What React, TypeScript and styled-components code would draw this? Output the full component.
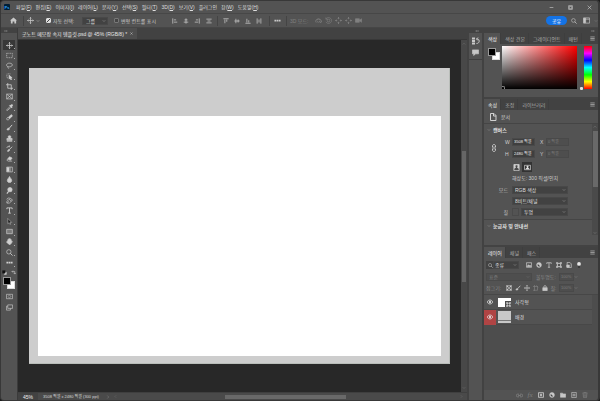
import React from "react";
import styled, { createGlobalStyle } from "styled-components";

const Global = createGlobalStyle`
  *, *::before, *::after { box-sizing: border-box; }
  html, body { margin: 0; padding: 0; background: #1c1c1c; }
  body, button, input, select {
    font-family: "Liberation Sans", "Noto Sans CJK KR", sans-serif;
    font-size: 5px;
    line-height: 8px;
    color: #d0d0d0;
  }
  button, input, select { margin: 0; padding: 0; border: 0; background: none; outline: none; }
  h1, h2, p, ul { margin: 0; padding: 0; font-weight: 400; font-size: 5px; list-style: none; }
`;

/* ---------- icons ---------- */

const glyphs: Record<string, React.ReactNode> = {
  home: <path fill="currentColor" stroke="none" d="M8 1 0 8h2v7h4v-5h4v5h4V8h2z" />,
  move: <path strokeWidth="1.8" d="M8 1v14M1 8h14M6 3l2-2 2 2M6 13l2 2 2-2M3 6 1 8l2 2M13 6l2 2-2 2" />,
  marquee: <path strokeDasharray="2.4 1.6" d="M1.500 3h13v10h-13z" />,
  lasso: <path d="M5 11C1 10 0 6 3 4s9-2 11 1-2 6-6 6c-2 0-4-1-4 1s3 1 2 3" />,
  quick: <><path strokeDasharray="2 1.500" d="M10 2H2v9h4" /><path fill="currentColor" d="m7 5 7 6-3 .4 2 3.600-2 .6-2-3.600-2 2z" /></>,
  crop: <path strokeWidth="1.8" d="M4 0v12h12M0 4h12v12" />,
  frame: <path d="M1.500 2.500h13v11h-13zM1.500 2.500l13 11M14.500 2.500l-13 11" />,
  dropper: <><path d="M9 6 2 13v2l2-1 7-6" /><path fill="currentColor" d="m8 4 5 5 1-2-1-1c2-1 3-3 2-4s-3-1-4 1L10 2z" /></>,
  heal: <><path fill="currentColor" d="M5 8 11 2c2-1 4 1 3 3l-6 6z" /><path d="M5 8c-3 0-4 2-3 5 3 1 5 0 6-2" /></>,
  brush: <><path strokeWidth="2.200" d="M14 2 7 10" /><path fill="currentColor" d="M6 9c-3 0-2 3-4 4 2 1 6 1 6-2z" /></>,
  stamp: <path fill="currentColor" d="M6 8c0-2-2-3-1-5s5-2 6 0-1 3-1 5h4v3H2V8zM2 13h12v1H2z" />,
  history: <><path strokeWidth="2" d="m14 4-7 7" /><path fill="currentColor" d="M7 10c-2 0-2 3-4 4 3 1 6 0 5-3z" /><path d="M2 7c0-4 4-5 6-3M8 1v3H5" /></>,
  eraser: <><path fill="currentColor" d="m8 4 6 3-4 5-6-3z" /><path d="m4 9-2 3 3 2h9" /></>,
  gradient: <><path d="M1.500 2.500h13v11h-13z" /><path fill="currentColor" stroke="none" opacity=".5" d="M7 3h4v10H7z" /><path fill="currentColor" stroke="none" d="M2 3h5v10H2z" /></>,
  blur: <path fill="currentColor" d="M8 1c2 4 5 6 5 9s-2 5-5 5-5-2-5-5 3-5 5-9z" />,
  dodge: <><circle cx="9" cy="6" r="5" fill="currentColor" /><path strokeWidth="2.500" d="m6 10-4 5" /></>,
  pen: <><path d="M2 14c-1-4 1-7 6-8l4 3c-1 4-5 6-9 5zM8 6l2-3 5 4-3 2M3 13l4-3" /><path d="M2 6c0-3 4-5 7-3" /></>,
  type: <path strokeWidth="2" d="M2 5V2h12v3M8 2v12M5 14h6" />,
  select: <path fill="#242424" strokeWidth="1" d="m4 1 9 9H9l2 4-2 1-2-4-3 2z" />,
  rect: <path fill="#7b7b7b" d="M1.500 3h13v10h-13z" />,
  hand: <path fill="currentColor" d="M4 8V4l1-1 1 1V2l1-1 1 1 1-1 1 1v2l1-1 1 1v4l2-1c1 1-2 7-5 8H7L1 9l1-1z" />,
  search: <><circle cx="6.500" cy="6.500" r="5" /><path strokeWidth="2" d="m10 10 5 5" /></>,
  dots: <path fill="currentColor" stroke="none" d="M1 6h4v4H1zM6 6h4v4H6zM11 6h4v4h-4z" />,
  mask: <><path d="M1 3h14v10H1z" /><circle cx="8" cy="8" r="3" strokeDasharray="2 1" /></>,
  screen: <path d="M4 2h11v8H4zM4 5H1v9h9v-4" />,
  swap: <path strokeWidth="2" d="M3 5h9v8M6 2 3 5l3 3M9 10l3 3 3-3" />,
  tiny: <><path fill="#ddd" d="M7 7h7v7H7z" /><path fill="#111" stroke="#111" d="M2 2h8v8H2z" /></>,
  alignL: <path strokeWidth="2" d="M2 1v14M5 5h6M5 11h9" />,
  alignC: <path strokeWidth="2" d="M8 1v14M4 5h8M2 11h12" />,
  alignR: <path strokeWidth="2" d="M14 1v14M11 5H5M11 11H2" />,
  distH: <path strokeWidth="2" d="M1 3h14M4 8h8M1 13h14" />,
  alignT: <path strokeWidth="2" d="M1 2h14M5 4v10M10 4v6" />,
  alignM: <path strokeWidth="2" d="M1 8h14M5 2v12M11 4v8" />,
  alignB: <path strokeWidth="2" d="M1 14h14M5 12V2M10 12V6" />,
  distV: <path strokeWidth="2" d="M3 1v14M8 4v8M13 1v14" />,
  orbit: <><circle cx="8" cy="8" r="4" /><path d="M3 13C-1 9 2 5 8 5s9 4 5 8M10 10l3 3 2-4" /></>,
  roll: <><circle cx="8" cy="8" r="3" /><path d="M2 5c3-6 13-4 13 3s-10 9-13 3M2 1v4h4" /></>,
  slide: <path strokeWidth="2" d="M8 1v4M8 11v4M1 8h4M11 8h4M6 3l2-2 2 2M6 13l2 2 2-2M3 6 1 8l2 2M13 6l2 2-2 2" />,
  camera: <path fill="currentColor" d="M1 4h9v8H1zM10 8l5-4v8z" />,
  workspace: <><path d="M1 2h14v12H1zM1 5h14" /><path fill="currentColor" d="M2 3h4v10H2z" /></>,
  chevron: <path strokeWidth="2" d="m3 5 5 5 5-5" />,
  menu: <path strokeWidth="2" d="M1 3h14M1 8h14M1 13h14" />,
  min: <path strokeWidth="2" d="M2 8h12" />,
  max: <path strokeWidth="2" d="M2 2h12v12H2zM4 5h8v7H4z" />,
  close: <path strokeWidth="2" d="m2 2 12 12M14 2 2 14" />,
  expand: <path strokeWidth="2" d="m2 4 4 4-4 4M9 4l4 4-4 4" />,
  collapse: <path strokeWidth="2" d="M7 4 3 8l4 4M14 4l-4 4 4 4" />,
  panel: <><path fill="currentColor" stroke="none" d="M0 1h6v4H0zM0 6h6v4H0zM0 11h6v4H0z" /><path strokeWidth="2" d="M9 13c6 0 7-7 3-9H9M12 1 9 4l3 3" /></>,
  comment: <path fill="currentColor" d="M1 2h14v9H8l-4 4v-4H1z" />,
  page: <path strokeWidth="2" d="M3 1h7l4 4v10H3zM9 1v5h5" />,
  link: <path strokeWidth="1.800" d="M5 7V4c0-4 6-4 6 0v3M5 9v3c0 4 6 4 6 0V9M8 5v6" />,
  portrait: <><path fill="#c9c9c9" d="M2 1h12v14H2z" /><path fill="#4a4a4a" stroke="none" d="M8 3c4 0 2 5 1 5l4 3v3H3v-3l4-3C5 6 5 3 8 3z" /></>,
  landscape: <><path d="M1 3h14v10H1z" /><path fill="currentColor" stroke="none" d="M8 4c4 0 2 4 1 4l3 2v2H4v-2l3-2C5 7 5 4 8 4z" /></>,
  image: <><path strokeWidth="2" d="M1 2h14v12H1z" /><path fill="currentColor" d="m3 12 3-5 3 3 2-2 2 4z" /></>,
  adjust: <><circle cx="8" cy="8" r="6.500" fill="currentColor" /><path fill="#424242" stroke="none" d="M5 5l6 6c-5 3-8-2-6-6z" /></>,
  shape: <path strokeWidth="2" d="M4 4h8v8H4zM1 1h4v4H1zM11 1h4v4h-4zM1 11h4v4H1zM11 11h4v4h-4z" />,
  smart: <><path strokeWidth="2" d="M3 1h7l4 4v10H3z" /><path fill="currentColor" d="M2 8h7v6H2z" /></>,
  pin: <><path d="M8 8v8" stroke="#333" strokeWidth="4" /><circle cx="8" cy="5" r="5" fill="#e8e8e8" stroke="none" /></>,
  checker: <><path d="M1 1h14v14H1z" /><path fill="currentColor" stroke="none" d="M2 2h4v4H2zM10 2h4v4h-4zM6 6h4v4H6zM2 10h4v4H2zM10 10h4v4h-4z" /></>,
  lock: <><path fill="currentColor" d="M2 7h12v8H2z" /><path strokeWidth="2" d="M5 7V4c0-3 6-3 6 0v3" /></>,
  artboard: <path strokeWidth="1.800" d="M4 0v16M0 4h12v10H0M9 1l5 5" />,
  eye: <><path strokeWidth="2" d="M0 8c4-7 12-7 16 0-4 7-12 7-16 0z" /><circle cx="8" cy="8" r="2.500" fill="currentColor" /></>,
  chain: <path strokeWidth="2" d="M7 5H3C0 5 0 11 3 11h4M9 5h4c3 0 3 6 0 6H9M5 8h6" />,
  layermask: <><path strokeWidth="2.500" d="M1 2h14v12H1z" /><circle cx="8" cy="8" r="2.500" fill="currentColor" /></>,
  folder: <path fill="currentColor" d="M1 3h6l2 2h6v9H1z" />,
  plus: <path strokeWidth="1.800" d="M2 1h12v14H2zM8 4v8M4 8h8" />,
  trash: <path strokeWidth="1.800" d="M1 3h14M5 3V1h6v2M3 4l1 11h8l1-11M6 6v7M10 6v7" />,
  right: <path strokeWidth="2" d="m5 2 6 6-6 6" />,
  left: <path strokeWidth="2" d="m11 2-6 6 6 6" />,
  up: <path strokeWidth="2" d="m3 10 5-5 5 5" />,
};

const Svg = styled.svg<{ $s: number }>`
  display: block;
  flex: none;
  width: ${(p) => p.$s}px;
  height: ${(p) => p.$s}px;
  fill: none;
  stroke: currentColor;
  stroke-width: 1.5;
`;
const Icon = ({ n, s = 7 }: { n: string; s?: number }) => (
  <Svg $s={s} viewBox="0 0 16 16" aria-hidden="true">{glyphs[n]}</Svg>
);

/* ---------- shared parts ---------- */

const IconButton = styled.button<{ $w?: number; $dim?: boolean }>`
  display: flex;
  flex: none;
  align-items: center;
  justify-content: center;
  width: ${(p) => p.$w ?? 10}px;
  height: 10px;
  color: ${(p) => (p.$dim ? "#808080" : "#c8c8c8")};
`;
const SelectBox = styled.span<{ $w: number; $dim?: boolean }>`
  position: relative;
  display: flex;
  flex: none;
  align-items: center;
  width: ${(p) => p.$w}px;
  height: 8px;
  background: ${(p) => (p.$dim ? "#4e4e4e" : "#424242")};
  border: 1px solid ${(p) => (p.$dim ? "#4a4a4a" : "#484848")};
  color: ${(p) => (p.$dim ? "#737373" : "#a2a2a2")};
  > svg { position: absolute; right: 1px; pointer-events: none; }
`;
const NativeSelect = styled.select<{ $pad: number }>`
  appearance: none;
  width: 100%;
  height: 8px;
  padding-left: ${(p) => p.$pad}px;
  color: ${(p) => (p.disabled ? "#7c7c7c" : "#dedede")};
  opacity: 1;
`;
const Select = ({ w, label, value, pad = 2, dim }: { w: number; label: string; value: string; pad?: number; dim?: boolean }) => (
  <SelectBox $w={w} $dim={dim}>
    <NativeSelect aria-label={label} $pad={pad} disabled={dim}><option>{value}</option></NativeSelect>
    <Icon n="chevron" s={4} />
  </SelectBox>
);
const Field = styled.input<{ $w: number }>`
  flex: none;
  width: ${(p) => p.$w}px;
  height: 8px;
  padding-left: 1px;
  font-size: 4px;
  background: #3f3f3f;
  border: 1px solid #494949;
  color: #f2f2f2;
  &:disabled { background: #4e4e4e; color: #7c7c7c; }
`;
const Check = styled.input`
  appearance: none;
  flex: none;
  width: 5px;
  height: 5px;
  margin-right: 2px;
  border: 1px solid #777;
  border-radius: 1px;
  background: #454545;
  &:checked {
    border-color: #dedede;
    background: linear-gradient(135deg, #dedede 40%, #444 40% 65%, #dedede 65%);
  }
`;

/* ---------- frame ---------- */

const Window = styled.div`
  display: flex;
  flex-direction: column;
  height: 100vh;
  overflow: hidden;
  background: #535353;
  border: 1px solid #383838;
  border-right-width: 2px;
  border-radius: 4px;
  white-space: nowrap;
`;
const TitleBar = styled.header`
  display: flex;
  flex: none;
  align-items: center;
  height: 13px;
  padding: 0 4px 0 3px;
  border-bottom: 1px solid #474747;
`;
const Logo = styled.span`
  display: grid;
  place-items: center;
  width: 6px;
  height: 6px;
  margin-right: 6px;
  border-radius: 1px;
  background: #001e36;
  color: #31a8ff;
  font-size: 4px;
  font-weight: 700;
  line-height: 5px;
`;
const Menu = styled.nav`
  display: flex;
  flex: 1;
  gap: 4px;
`;
const MenuItem = styled.button`
  color: #dedede;
`;
const WindowControls = styled.div`
  display: flex;
  gap: 9px;
`;

const OptionsBar = styled.div`
  display: flex;
  flex: none;
  align-items: center;
  height: 14px;
  border-bottom: 1px solid #464646;
`;
const Group = styled.div<{ $w?: number; $gap?: number; $line?: boolean; $pad?: number; $dim?: boolean }>`
  display: flex;
  flex: none;
  align-items: center;
  width: ${(p) => (p.$w ? `${p.$w}px` : "auto")};
  height: 10px;
  gap: ${(p) => p.$gap ?? 0}px;
  padding-left: ${(p) => p.$pad ?? 0}px;
  border-left: ${(p) => (p.$line ? "1px solid #444" : "0")};
  color: ${(p) => (p.$dim ? "#808080" : "#bbb")};
`;
const CheckLabel = styled.label`
  display: flex;
  align-items: center;
  color: #cacaca;
`;
const Spacer = styled.span`
  flex: 1;
`;
const Share = styled.button`
  width: 21px;
  height: 9px;
  border-radius: 5px;
  background: #1473e6;
  color: #fff;
`;

const Body = styled.div`
  display: flex;
  flex: 1;
  min-height: 0;
`;

/* ---------- tools ---------- */

const ToolColumn = styled.aside`
  flex: none;
  width: 17px;
  border-right: 1px solid #3b3b3b;
`;
const Grip = styled.div<{ $end?: boolean }>`
  display: flex;
  flex: none;
  align-items: center;
  justify-content: ${(p) => (p.$end ? "flex-end" : "flex-start")};
  height: 5px;
  padding: 0 3px;
  background: #424242;
  color: #aaa;
`;
const ToolList = styled.div`
  display: grid;
  grid-auto-rows: 1fr;
  justify-items: center;
  height: 228px;
  margin-top: 7px;
`;
const Tool = styled.button<{ $active?: boolean }>`
  display: grid;
  place-items: center;
  position: relative;
  width: 12px;
  height: 10px;
  color: #d0d0d0;
  background: ${(p) => (p.$active ? "#383838" : "none")};
  &::after {
    content: "";
    position: absolute;
    right: 0;
    bottom: 1px;
    width: 1px;
    height: 1px;
    background: #aaa;
  }
`;
const MiniRow = styled.div`
  display: flex;
  justify-content: center;
  gap: 4px;
  height: 9px;
  padding-top: 2px;
  color: #ccc;
`;
const Swatches = styled.div`
  position: relative;
  width: 12px;
  height: 12px;
  margin: 0 auto;
`;
const Swatch = styled.button<{ $back?: boolean }>`
  position: absolute;
  ${(p) => (p.$back ? "right: 0; bottom: 0; background: #fff;" : "left: 0; top: 0; background: #000; z-index: 1;")}
  width: 8px;
  height: 8px;
  border: 1px solid ${(p) => (p.$back ? "#ddd" : "#999")};
`;
const ToolFoot = styled.div`
  display: flex;
  flex-direction: column;
  align-items: center;
  gap: 1px;
  padding-top: 2px;
`;

const tools: [string, string][] = [
  ["move", "이동"], ["marquee", "선택 윤곽"], ["lasso", "올가미"], ["quick", "개체 선택"],
  ["crop", "자르기"], ["frame", "프레임"], ["dropper", "스포이드"], ["heal", "복구 브러시"],
  ["brush", "브러시"], ["stamp", "도장"], ["history", "작업 내역 브러시"], ["eraser", "지우개"],
  ["gradient", "그레이디언트"], ["blur", "흐림"], ["dodge", "닷지"], ["pen", "펜"],
  ["type", "문자"], ["select", "패스 선택"], ["rect", "사각형"], ["hand", "손"],
  ["search", "돋보기"], ["dots", "더 보기"],
];

/* ---------- document ---------- */

const DocumentArea = styled.main`
  display: flex;
  flex: 1;
  flex-direction: column;
  min-width: 0;
`;
const DocTabs = styled.div`
  display: flex;
  flex: none;
  height: 12px;
  background: #424242;
  border-bottom: 1px solid #383838;
`;
const DocTab = styled.button`
  display: flex;
  align-items: center;
  gap: 3px;
  padding: 0 4px;
  background: #4e4e4e;
  color: #e6e6e6;
`;
const Stage = styled.div`
  display: flex;
  flex: 1;
  min-height: 0;
`;
const Pasteboard = styled.div`
  display: flex;
  flex: 1;
  padding: 28px 11px;
  background: #282828;
`;
const Artboard = styled.div`
  display: flex;
  flex: 1;
  padding: 48px 8px 7px 9px;
  background: #cdcdcd;
  border: 1px solid #b9bdb9;
  border-width: 0 1px 1px 0;
`;
const Shape = styled.div`
  flex: 1;
  background: #fff;
`;
const VScroll = styled.div`
  display: flex;
  flex: none;
  flex-direction: column;
  align-items: center;
  justify-content: space-between;
  width: 6px;
  padding: 2px 0;
  background: #484848;
  color: #777;
`;
const VThumb = styled.div`
  width: 4px;
  height: 131px;
  background: #666;
`;
const StatusBar = styled.footer`
  display: flex;
  flex: none;
  align-items: center;
  height: 8px;
  border-top: 1px solid #3f3f3f;
  background: #4a4a4a;
`;
const Zoom = styled.span`
  width: 20px;
  padding-left: 5px;
  background: #424242;
  color: #eee;
`;
const DocSize = styled.span`
  width: 68px;
  padding-left: 5px;
  color: #d6d6d6;
  font-size: 4px;
`;
const HTrack = styled.div`
  display: flex;
  flex: 1;
  justify-content: center;
  padding-right: 7px;
`;
const HThumb = styled.div`
  width: 121px;
  height: 4px;
  background: #696969;
`;

/* ---------- dock ---------- */

const IconDock = styled.aside`
  flex: none;
  width: 17px;
  border: 1px solid #424242;
  border-width: 0 2px 0 2px;
`;
const DockIcons = styled.div`
  display: flex;
  flex-direction: column;
  align-items: center;
  height: 27px;
  padding-top: 3px;
  gap: 1px;
  border-bottom: 1px solid #404040;
`;
const Dock = styled.aside`
  display: flex;
  flex: none;
  flex-direction: column;
  width: 114px;
`;
const Panel = styled.section<{ $h?: number }>`
  display: flex;
  flex: ${(p) => (p.$h ? "none" : "1")};
  flex-direction: column;
  min-height: 0;
  height: ${(p) => (p.$h ? `${p.$h}px` : "auto")};
  border-bottom: ${(p) => (p.$h ? "2px solid #434343" : "0")};
`;
const Tabs = styled.div`
  display: flex;
  flex: none;
  align-items: stretch;
  height: 11px;
  padding-right: 3px;
  background: #424242;
`;
const Tab = styled.button<{ $on?: boolean }>`
  padding: 0 4px;
  background: ${(p) => (p.$on ? "#535353" : "none")};
  color: ${(p) => (p.$on ? "#f2f2f2" : "#acacac")};
  box-shadow: inset -1px 0 #3e3e3e;
`;
const PanelTabs = ({ names }: { names: string[] }) => (
  <Tabs role="tablist">
    {names.map((n, i) => <Tab key={n} role="tab" aria-selected={i === 0} $on={i === 0}>{n}</Tab>)}
    <Spacer />
    <IconButton $w={5} aria-label="패널 메뉴"><Icon n="menu" s={5} /></IconButton>
  </Tabs>
);

const ColorBody = styled.div`
  display: flex;
  flex: 1;
  min-height: 0;
  padding: 2px 6px 8px 4px;
`;
const ColorField = styled.div`
  position: relative;
  flex: 1;
  margin: 0 7px 0 2px;
  background: linear-gradient(to top, #000, transparent), linear-gradient(to right, #fff, #f00);
`;
const ColorCursor = styled.span`
  position: absolute;
  left: 0;
  bottom: 0;
  width: 3px;
  height: 3px;
  border: 1px solid #888;
  border-width: 1px 1px 0 0;
  border-radius: 0 2px 0 0;
`;
const HueBox = styled.div`
  position: relative;
  display: flex;
  width: 8px;
`;
const HueMark = styled.span`
  position: absolute;
  left: -4px;
  bottom: -1px;
  width: 3px;
  height: 3px;
  border-radius: 1px;
  background: #e4e4e4;
`;
const HueSlider = styled.input`
  appearance: none;
  writing-mode: vertical-lr;
  direction: rtl;
  width: 8px;
  height: 100%;
  min-height: 0;
  background: linear-gradient(#f00, #f0f 17%, #00f 33%, #0ff 50%, #0f0 67%, #ff0 83%, #f00);
  &::-webkit-slider-thumb { appearance: none; width: 8px; height: 2px; background: transparent; }
`;
const ColorSwatches = styled.div`
  padding-top: 2px;
`;

const PropHead = styled.div`
  display: flex;
  flex: none;
  align-items: center;
  gap: 4px;
  height: 14px;
  padding-left: 5px;
  border-bottom: 1px solid #454545;
`;
const PropBody = styled.div`
  display: flex;
  flex: 1;
  min-height: 0;
`;
const PropMain = styled.div`
  flex: 1;
`;
const SectionTitle = styled.h2`
  display: flex;
  align-items: center;
  gap: 2px;
  height: 12px;
  padding-left: 3px;
  color: #e2e2e2;
  font-weight: 700;
  > svg { color: #999; }
`;
const CanvasGrid = styled.div`
  display: grid;
  grid-template-columns: 21px 7px 28px 6px 23px;
  grid-auto-rows: 8px;
  row-gap: 4px;
  align-items: center;
  padding-top: 2px;
`;
const LinkCell = styled.div`
  display: grid;
  grid-row: span 2;
  place-items: center;
  padding-right: 2px;
`;
const Orientation = styled.div`
  display: flex;
  align-items: center;
  gap: 1px;
  height: 10px;
  margin: 4px 0 0 27px;
`;
const OrientButton = styled.button<{ $on?: boolean }>`
  display: grid;
  place-items: center;
  width: 10px;
  height: 10px;
  background: ${(p) => (p.$on ? "#333" : "none")};
  color: #e0e0e0;
`;
const Resolution = styled.p`
  height: 9px;
  margin: 2px 0;
  padding-left: 28px;
`;
const PropRow = styled.div<{ $h: number }>`
  display: grid;
  grid-template-columns: 24px auto auto 1fr;
  align-items: center;
  column-gap: 4px;
  height: ${(p) => p.$h}px;
`;
const RowLabel = styled.span`
  text-align: right;
  color: #bcbcbc;
`;
const FillBox = styled.button`
  width: 7px;
  height: 8px;
  margin-right: -2px;
  border: 1px solid #4a4a4a;
`;
const Divider = styled.div`
  height: 1px;
  margin-top: 1px;
  background: #454545;
`;
const PropScroll = styled.div`
  display: flex;
  flex-direction: column;
  align-items: center;
  width: 6px;
  margin-bottom: 10px;
  padding-top: 1px;
  background: #4a4a4a;
  color: #888;
`;
const PropThumb = styled.div`
  width: 5px;
  height: 56px;
  margin: 2px 0 auto;
  background: #696969;
`;

const LayerRow = styled.div<{ $h: number; $dim?: boolean }>`
  display: flex;
  flex: none;
  align-items: center;
  height: ${(p) => p.$h}px;
  padding-left: 2px;
  color: ${(p) => (p.$dim ? "#888" : "#ccc")};
`;
const FilterSelect = styled.div`
  display: flex;
  flex: none;
  align-items: center;
  padding-left: 2px;
  background: #424242;
`;
const LabelCell = styled.label<{ $w: number }>`
  flex: none;
  width: ${(p) => p.$w}px;
`;
const LayerList = styled.ul`
  flex: 1;
  background: #4d4d4d;
  border-top: 1px solid #474747;
`;
const Layer = styled.li`
  display: flex;
  align-items: center;
  height: 15px;
  margin-right: 6px;
  border-bottom: 1px solid #484848;
  background: #535353;
  color: #ddd;
`;
const Visibility = styled.button<{ $red?: boolean }>`
  display: grid;
  flex: none;
  place-items: center;
  width: 12px;
  height: 15px;
  margin-right: 2px;
  color: #e6e6e6;
  background: ${(p) => (p.$red ? "#b04444" : "none")};
`;
const Thumb = styled.span<{ $bg?: boolean }>`
  position: relative;
  flex: none;
  width: 13px;
  height: ${(p) => (p.$bg ? 12 : 9)}px;
  margin-right: 4px;
  background: ${(p) => (p.$bg ? "linear-gradient(#c8c8c8 9px, #777 9px 10px, #c8c8c8 10px)" : "#fff")};
`;
const Badge = styled.span`
  position: absolute;
  right: 0;
  bottom: 0;
  padding: 1px 0 0 1px;
  background: #4a4a4a;
  color: #ddd;
`;
const LayerTools = styled.div`
  display: flex;
  flex: none;
  align-items: center;
  justify-content: flex-end;
  gap: 1px;
  height: 10px;
  padding-right: 8px;
`;
const Fx = styled.i`
  font-family: "Liberation Serif", serif;
  font-size: 7px;
`;

const menus: [string, string][] = [
  ["파일", "F"], ["편집", "E"], ["이미지", "I"], ["레이어", "L"], ["문자", "Y"], ["선택", "S"],
  ["필터", "T"], ["3D", "D"], ["보기", "V"], ["플러그인", ""], ["창", "W"], ["도움말", "H"],
];

export default function App() {
  return (
    <>
      <Global />
      <Window>
        <TitleBar>
          <Logo>Ps</Logo>
          <Menu>
            {menus.map(([t, k]) => <MenuItem key={t}>{t}{k && <>(<u>{k}</u>)</>}</MenuItem>)}
          </Menu>
          <WindowControls>
            <IconButton aria-label="최소화"><Icon n="min" s={5} /></IconButton>
            <IconButton aria-label="최대화"><Icon n="max" s={5} /></IconButton>
            <IconButton aria-label="닫기"><Icon n="close" s={5} /></IconButton>
          </WindowControls>
        </TitleBar>

        <OptionsBar>
          <Group $w={22} $pad={7}><IconButton aria-label="홈"><Icon n="home" /></IconButton></Group>
          <Group $w={23} $pad={1} $gap={1} $line>
            <IconButton aria-label="이동 도구"><Icon n="move" /></IconButton>
            <Icon n="chevron" s={4} />
          </Group>
          <Group $w={36}><CheckLabel><Check type="checkbox" defaultChecked />자동 선택:</CheckLabel></Group>
          <Group $w={32}><Select w={26} label="자동 선택" value="그룹" pad={3} /></Group>
          <Group $w={55}><CheckLabel><Check type="checkbox" />변형 컨트롤 표시</CheckLabel></Group>
          <Group $w={35} $pad={1} $gap={1}>
            {["alignL", "alignC", "alignR"].map((n) => <IconButton key={n} aria-label={n}><Icon n={n} s={6} /></IconButton>)}
          </Group>
          <Group $w={13}><IconButton aria-label="distH"><Icon n="distH" s={6} /></IconButton></Group>
          <Group $w={37} $pad={3} $gap={1} $line>
            {["alignT", "alignM", "alignB"].map((n) => <IconButton key={n} aria-label={n}><Icon n={n} s={6} /></IconButton>)}
          </Group>
          <Group $w={15}><IconButton aria-label="distV"><Icon n="distV" s={6} /></IconButton></Group>
          <Group $w={17} $pad={2} $line><IconButton aria-label="맞춤 옵션"><Icon n="dots" /></IconButton></Group>
          <Group $w={27} $pad={3} $line $dim>3D 모드:</Group>
          <Group>
            {["orbit", "roll", "slide", "slide", "camera"].map((n, i) => (
              <IconButton key={i} $w={10} $dim aria-label={`3D ${i + 1}`}><Icon n={n} /></IconButton>
            ))}
          </Group>
          <Spacer />
          <Share>공유</Share>
          <Group $pad={2} $gap={2}>
            <IconButton aria-label="검색"><Icon n="search" s={6} /></IconButton>
            <IconButton aria-label="작업 영역"><Icon n="workspace" /></IconButton>
            <IconButton $w={5} $dim aria-label="작업 영역 선택"><Icon n="chevron" s={4} /></IconButton>
          </Group>
        </OptionsBar>

        <Body>
          <ToolColumn>
            <Grip><Icon n="expand" s={4} /></Grip>
            <ToolList>
              {tools.map(([n, t], i) => <Tool key={n} $active={i === 0} aria-label={t}><Icon n={n} /></Tool>)}
            </ToolList>
            <MiniRow><Icon n="tiny" s={5} /><Icon n="swap" s={5} /></MiniRow>
            <Swatches>
              <Swatch aria-label="전경색" />
              <Swatch $back aria-label="배경색" />
            </Swatches>
            <ToolFoot>
              <IconButton aria-label="빠른 마스크"><Icon n="mask" /></IconButton>
              <IconButton aria-label="화면 모드"><Icon n="screen" /></IconButton>
            </ToolFoot>
          </ToolColumn>

          <DocumentArea>
            <DocTabs role="tablist">
              <DocTab role="tab" aria-selected>
                굿노트 메모장 속지 템플릿.psd @ 45% (RGB/8) * <Icon n="close" s={3} />
              </DocTab>
            </DocTabs>
            <Stage>
              <Pasteboard><Artboard><Shape /></Artboard></Pasteboard>
              <VScroll><Icon n="up" s={4} /><VThumb /><Icon n="chevron" s={4} /></VScroll>
            </Stage>
            <StatusBar>
              <Zoom>45%</Zoom>
              <DocSize>3508 픽셀 x 2480 픽셀 (300 ppi)</DocSize>
              <Group $gap={4} $dim><Icon n="right" s={4} /><Icon n="left" s={3} /></Group>
              <HTrack><HThumb /></HTrack>
              <Group $w={7} $dim><Icon n="right" s={3} /></Group>
            </StatusBar>
          </DocumentArea>

          <IconDock>
            <Grip $end><Icon n="collapse" s={4} /></Grip>
            <DockIcons>
              <IconButton aria-label="작업 내역"><Icon n="panel" s={8} /></IconButton>
              <IconButton aria-label="댓글"><Icon n="comment" /></IconButton>
            </DockIcons>
          </IconDock>

          <Dock>
            <Grip $end><Icon n="expand" s={4} /></Grip>
            <Panel $h={66}>
              <PanelTabs names={["색상", "색상 견본", "그레이디언트", "패턴"]} />
              <ColorBody>
                <ColorSwatches>
                  <Swatches>
                    <Swatch aria-label="전경색" />
                    <Swatch $back aria-label="배경색" />
                  </Swatches>
                </ColorSwatches>
                <ColorField><ColorCursor /></ColorField>
                <HueBox>
                  <HueSlider type="range" aria-label="색조" defaultValue={0} />
                  <HueMark />
                </HueBox>
              </ColorBody>
            </Panel>

            <Panel $h={148}>
              <PanelTabs names={["속성", "조정", "라이브러리"]} />
              <PropHead><Icon n="page" s={8} />문서</PropHead>
              <PropBody>
                <PropMain>
                  <SectionTitle><Icon n="chevron" s={4} />캔버스</SectionTitle>
                  <CanvasGrid>
                    <LinkCell><Icon n="link" s={8} /></LinkCell>
                    <label htmlFor="w">W</label>
                    <Field id="w" $w={23} defaultValue="3508 픽셀" />
                    <label htmlFor="x">X</label>
                    <Field id="x" $w={23} defaultValue="0 픽셀" disabled />
                    <label htmlFor="h">H</label>
                    <Field id="h" $w={23} defaultValue="2480 픽셀" />
                    <label htmlFor="y">Y</label>
                    <Field id="y" $w={23} defaultValue="0 픽셀" disabled />
                  </CanvasGrid>
                  <Orientation>
                    <OrientButton aria-label="세로"><Icon n="portrait" /></OrientButton>
                    <OrientButton $on aria-label="가로"><Icon n="landscape" /></OrientButton>
                  </Orientation>
                  <Resolution>해상도: 300 픽셀/인치</Resolution>
                  <PropRow $h={10}><RowLabel>모드</RowLabel><Select w={56} label="모드" value="RGB 색상" /></PropRow>
                  <PropRow $h={11}><RowLabel /><Select w={56} label="비트 심도" value="8비트/채널" /></PropRow>
                  <PropRow $h={12}><RowLabel>칠</RowLabel><FillBox aria-label="칠 색상" /><Select w={47} label="칠" value="투명" /></PropRow>
                  <Divider />
                  <SectionTitle><Icon n="chevron" s={4} />눈금자 및 안내선</SectionTitle>
                </PropMain>
                <PropScroll><Icon n="up" s={4} /><PropThumb /><Icon n="chevron" s={4} /></PropScroll>
              </PropBody>
            </Panel>

            <Panel>
              <PanelTabs names={["레이어", "채널", "패스"]} />
              <LayerRow $h={14}>
                <FilterSelect>
                  <Icon n="search" s={5} />
                  <Select w={26} label="종류" value="종류" pad={1} />
                </FilterSelect>
                <Group $pad={5}>
                  {["image", "adjust", "type", "shape", "smart", "pin"].map((n) => (
                    <IconButton key={n} aria-label={n}><Icon n={n} s={6} /></IconButton>
                  ))}
                </Group>
              </LayerRow>
              <LayerRow $h={10} $dim>
                <Group $w={50}><Select w={46} label="혼합 모드" value="표준" dim /></Group>
                <LabelCell $w={23} htmlFor="opacity">불투명도:</LabelCell>
                <Field id="opacity" $w={15} defaultValue="100%" disabled />
                <Icon n="chevron" s={4} />
              </LayerRow>
              <LayerRow $h={12} $dim>
                <LabelCell as="span" $w={18}>잠그기:</LabelCell>
                {["checker", "brush", "move", "artboard", "lock"].map((n) => (
                  <IconButton key={n} $w={9} $dim={n === "artboard"} aria-label={n}><Icon n={n} s={6} /></IconButton>
                ))}
                <LabelCell $w={10} htmlFor="fill">&nbsp;칠:</LabelCell>
                <Field id="fill" $w={15} defaultValue="100%" disabled />
                <Icon n="chevron" s={4} />
              </LayerRow>
              <LayerList>
                <Layer>
                  <Visibility aria-label="사각형 표시"><Icon n="eye" s={6} /></Visibility>
                  <Thumb><Badge><Icon n="shape" s={5} /></Badge></Thumb>사각형
                </Layer>
                <Layer>
                  <Visibility $red aria-label="배경 표시"><Icon n="eye" s={6} /></Visibility>
                  <Thumb $bg />배경
                </Layer>
              </LayerList>
              <LayerTools>
                <IconButton $dim aria-label="연결"><Icon n="chain" /></IconButton>
                <IconButton $dim aria-label="효과"><Fx>fx</Fx></IconButton>
                <IconButton aria-label="마스크"><Icon n="layermask" s={6} /></IconButton>
                <IconButton aria-label="조정"><Icon n="adjust" s={6} /></IconButton>
                <IconButton aria-label="그룹"><Icon n="folder" s={6} /></IconButton>
                <IconButton aria-label="새 레이어"><Icon n="plus" s={6} /></IconButton>
                <IconButton $dim aria-label="삭제"><Icon n="trash" s={6} /></IconButton>
              </LayerTools>
            </Panel>
          </Dock>
        </Body>
      </Window>
    </>
  );
}
